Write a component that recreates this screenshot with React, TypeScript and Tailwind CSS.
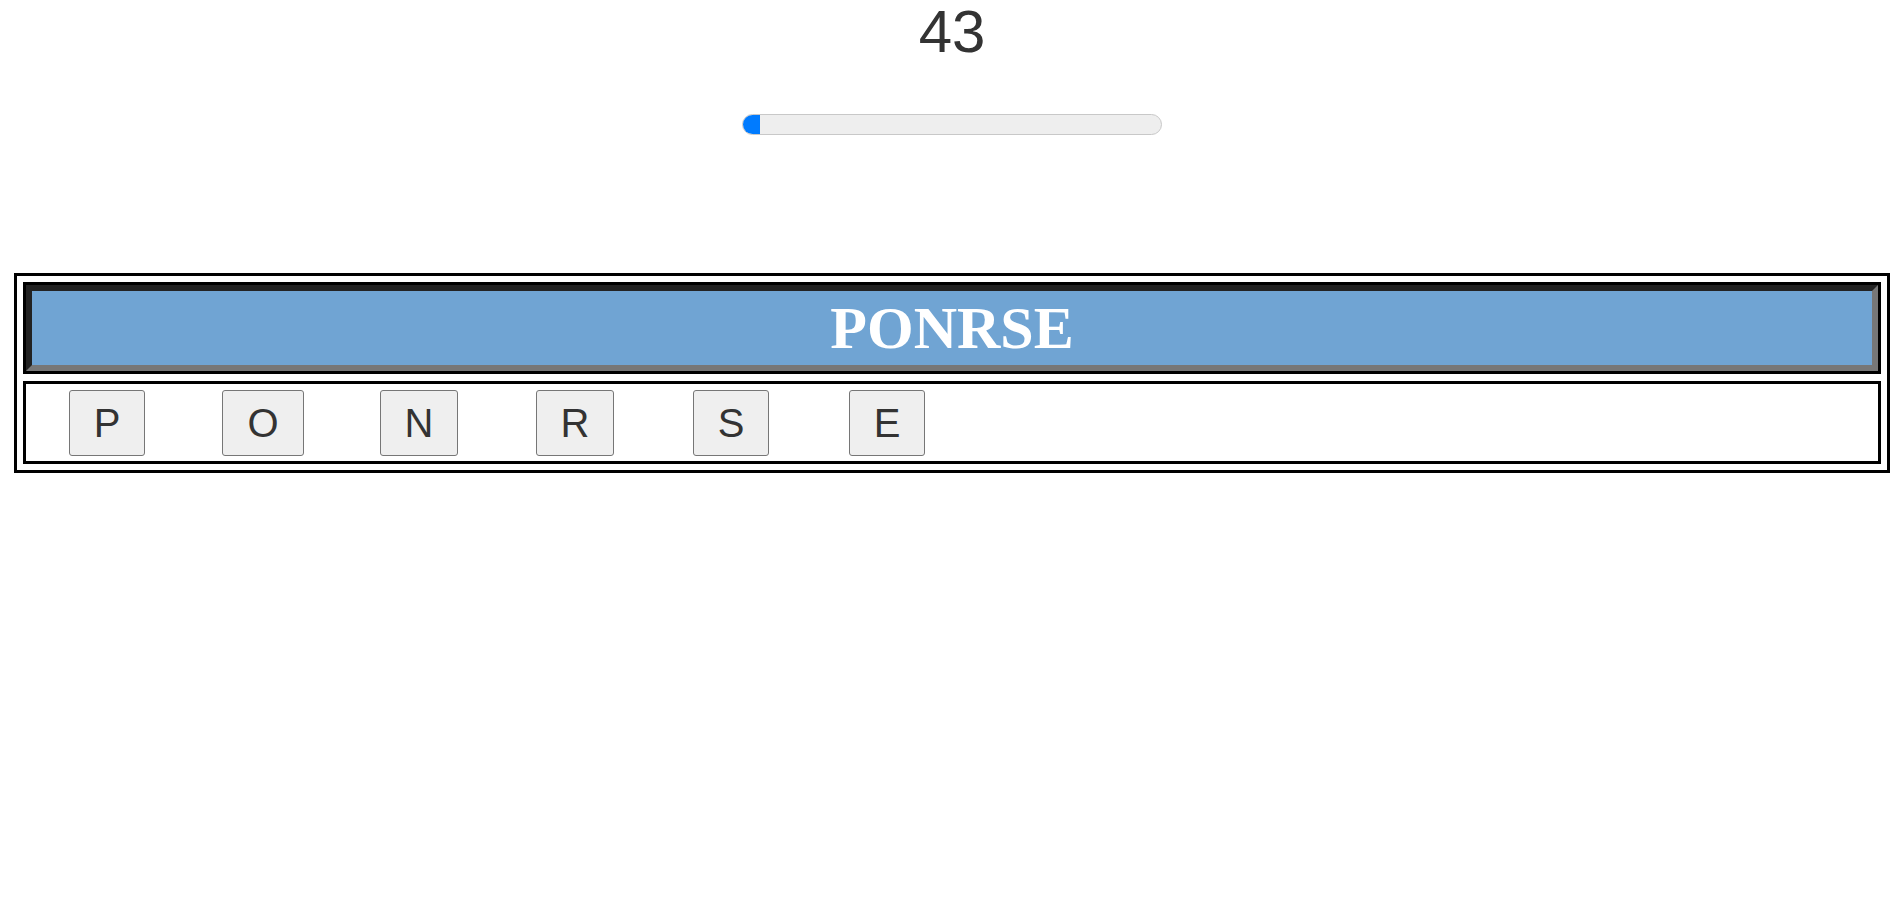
import React from 'react';

const letters = ['P', 'O', 'N', 'R', 'S', 'E'];

export default function App() {
    const progress = 4;

    return (
        <div className="pl-[8px] bg-white min-h-screen font-['Liberation_Sans',Arial,sans-serif]">
            <div className="text-center text-[60px] leading-[64px] text-[#333]">43</div>

            <div className="mx-auto mt-[50px] w-[420px] h-[21px] rounded-full border border-[#c8c8c8] bg-[#eeeeee] overflow-hidden">
                <div className="h-full bg-[#007bff]" style={{ width: `${progress}%` }} />
            </div>

            <div className="mx-[6px] mt-[138px] border-[3px] border-black p-[6px]">
                <div className="border-[3px] border-black">
                    <div className="border-[6px] border-t-[#222] border-l-[#222] border-b-[#777] border-r-[#777] bg-[#70a4d3] h-[86px] flex items-center justify-center">
                        <h1 className="font-['Liberation_Serif','Times_New_Roman',serif] font-bold text-[60px] leading-none text-white">
                            PONRSE
                        </h1>
                    </div>
                </div>

                <div className="mt-[7px] border-[3px] border-black h-[83px] flex items-center pl-[3px]">
                    {letters.map((letter, idx) => (
                        <div key={idx} className="w-[156px] flex justify-center">
                            <button className="px-6 py-[9px] text-[40px] leading-[46px] text-[#333] bg-[#efefef] border border-[#767676] rounded-[3px]">
                                {letter}
                            </button>
                        </div>
                    ))}
                </div>
            </div>
        </div>
    );
}
